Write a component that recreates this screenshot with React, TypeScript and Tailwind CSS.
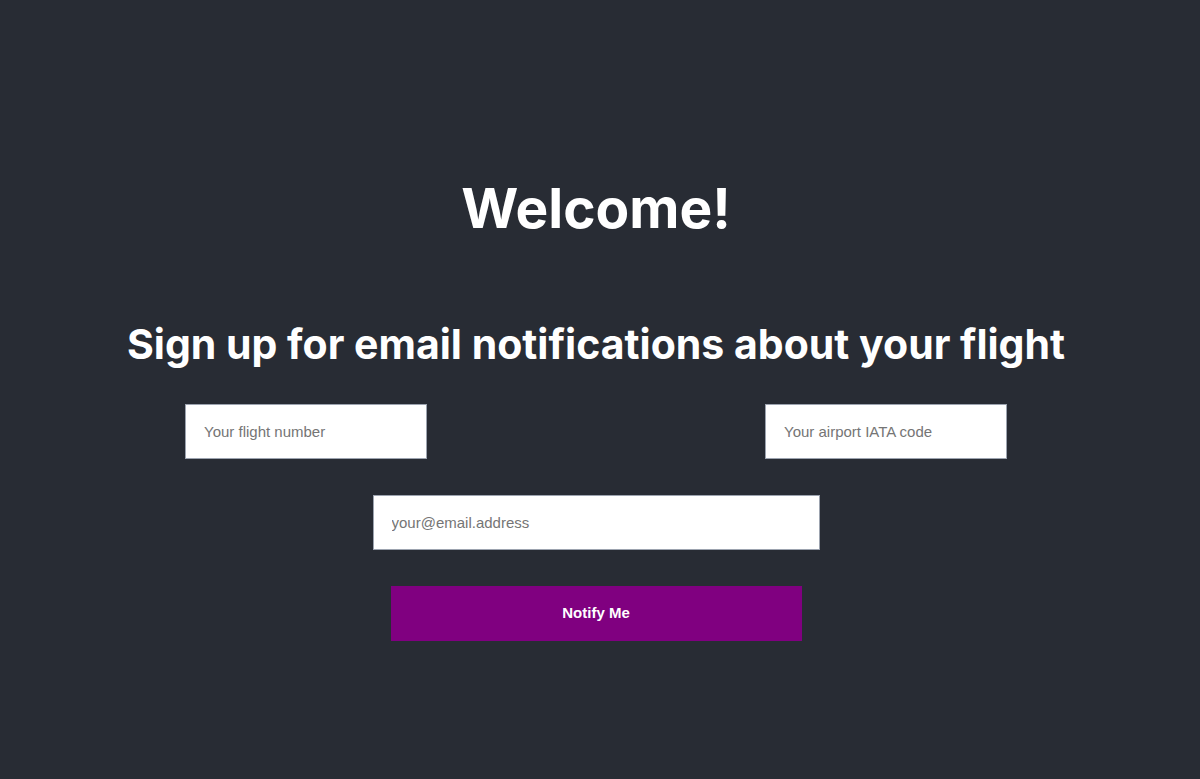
export default function App() {
  return (
    <div className="min-h-[779px] w-full bg-[#282c34] text-white">
      <div className="mx-auto flex w-[1192px] flex-col items-center pt-[170px] mr-[8px]">
        <h1 className="font-['Inter',sans-serif] text-[55px] font-bold leading-[76px]">Welcome!</h1>
        <h2 className="mt-[70px] font-['Inter',sans-serif] text-[41px] font-bold leading-[56px]">
          Sign up for email notifications about your flight
        </h2>
        <div className="mt-[32px] flex w-[822px] justify-between">
          <input
            className="h-[55px] w-[242px] border border-[#9ca3af] bg-white px-[18px] font-['Liberation_Sans',Arial,sans-serif] text-[15px] text-black placeholder:text-[#757575] outline-none"
            placeholder="Your flight number"
          />
          <input
            className="h-[55px] w-[242px] border border-[#9ca3af] bg-white px-[18px] font-['Liberation_Sans',Arial,sans-serif] text-[15px] text-black placeholder:text-[#757575] outline-none"
            placeholder="Your airport IATA code"
          />
        </div>
        <input
          className="mt-[36px] h-[55px] w-[447px] border border-[#9ca3af] bg-white px-[18px] font-['Liberation_Sans',Arial,sans-serif] text-[15px] text-black placeholder:text-[#757575] outline-none"
          placeholder="your@email.address"
        />
        <button className="mt-[36px] h-[55px] w-[411px] bg-[#800080] font-['Liberation_Sans',Arial,sans-serif] text-[15px] font-bold text-white">
          Notify Me
        </button>
      </div>
    </div>
  );
}
